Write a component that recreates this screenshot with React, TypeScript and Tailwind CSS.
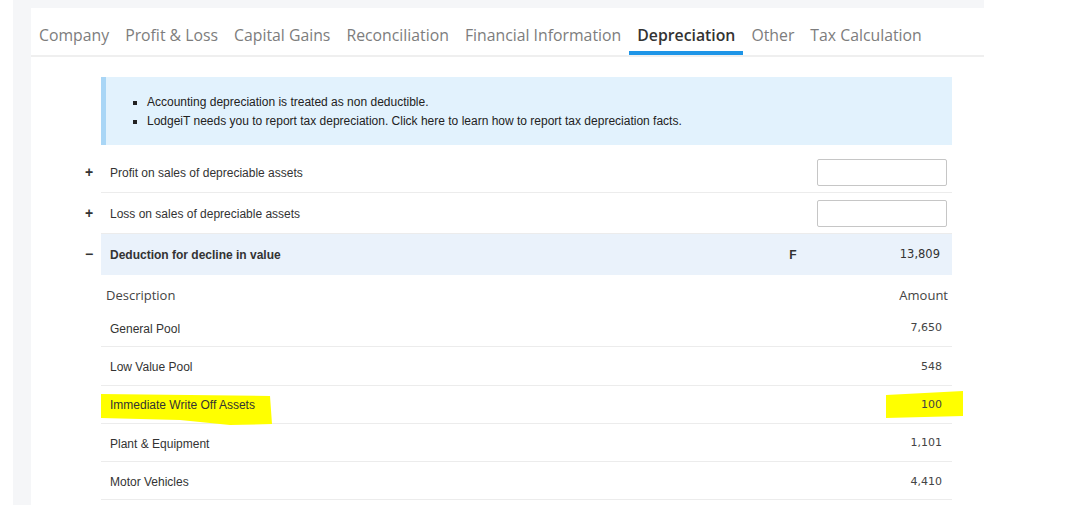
import React from 'react';

const tabs = [
    'Company',
    'Profit & Loss',
    'Capital Gains',
    'Reconciliation',
    'Financial Information',
    'Depreciation',
    'Other',
    'Tax Calculation',
];

const items = [
    { label: 'General Pool', amount: '7,650' },
    { label: 'Low Value Pool', amount: '548' },
    { label: 'Immediate Write Off Assets', amount: '100', marked: true },
    { label: 'Plant & Equipment', amount: '1,101' },
    { label: 'Motor Vehicles', amount: '4,410' },
];

function Marker() {
    // freehand yellow highlighter strokes over the row
    return (
        <svg className="absolute left-0 top-0 overflow-visible pointer-events-none" width="1" height="1">
            <polygon points="0,8 169,10 171,38 129,39 79,34 0,32" fill="#ffff00" />
            <polygon points="785,9 862,5 862,30 785,32" fill="#ffff00" />
        </svg>
    );
}

function SectionRow({ sign, label, right, open }: { sign: string; label: string; right: React.ReactNode; open?: boolean }) {
    return (
        <div className="flex">
            <div className="w-[24px] flex items-center justify-center text-[14px] font-bold text-[#333]">{sign}</div>
            <div className={`flex-1 flex items-center h-[41px] pl-[9px] ${open ? 'bg-[#eaf2fb] font-bold' : 'border-b-[1.5px] border-[#ececec]'}`}>
                <span className="flex-1 pt-[1px]">{label}</span>
                {right}
            </div>
        </div>
    );
}

function InputBox() {
    return <div className="w-[130px] h-[27px] mr-[5px] border border-[#c6c6c6] rounded-[2px] bg-white"></div>;
}

export default function App() {
    return (
        <div className="w-[1090px] h-[512px] bg-white overflow-hidden">
            <div className="ml-[13px] w-[971px] h-[505px] bg-[#f5f6f8] pt-[8px] pl-[18px] flex">
                <div className="flex-1 bg-white overflow-hidden">
                    <nav className="flex border-b-2 border-[#efefef]" style={{ fontFamily: '"Open Sans", sans-serif' }}>
                        {tabs.map(t => (
                            <div
                                key={t}
                                className={`px-[8px] pt-[16px] pb-[5px] text-[15.8px] leading-[22px] border-b-4 ${t === 'Depreciation' ? 'border-[#1e95e7] text-[#333] font-semibold' : 'border-transparent text-[#7d7d7d]'}`}
                            >
                                {t}
                            </div>
                        ))}
                    </nav>

                    <div className="pl-[46px] pr-[32px] pt-[20px] text-[12px] text-[#333]" style={{ fontFamily: '"Liberation Sans", Arial, sans-serif' }}>
                        <div className="ml-[24px] h-[68px] bg-[#e2f2fd] border-l-[5px] border-[#a9d6f6] pt-[16px]">
                            <ul className="list-[square] pl-[41px] text-[12px] leading-[19px] text-[#222]">
                                <li>Accounting depreciation is treated as non deductible.</li>
                                <li>LodgeiT needs you to report tax depreciation. Click here to learn how to report tax depreciation facts.</li>
                            </ul>
                        </div>

                        <div className="mt-[7px]">
                            <SectionRow sign="+" label="Profit on sales of depreciable assets" right={<InputBox />} />
                            <SectionRow sign="+" label="Loss on sales of depreciable assets" right={<InputBox />} />
                            <SectionRow
                                sign="−"
                                label="Deduction for decline in value"
                                open
                                right={
                                    <>
                                        <span className="w-[50px] text-center">F</span>
                                        <span className="w-[134px] text-right pr-[12px] font-normal text-[11.5px]" style={{ fontFamily: '"DejaVu Sans", Verdana, sans-serif' }}>13,809</span>
                                    </>
                                }
                            />
                        </div>

                        <div className="ml-[24px]">
                            <div className="flex h-[34px] pt-[11px] pl-[5px] pr-[4px] text-[13px] leading-[18px] text-[#444]" style={{ fontFamily: '"Open Sans", sans-serif' }}>
                                <span className="flex-1">Description</span>
                                <span>Amount</span>
                            </div>
                            {items.map(it => (
                                <div key={it.label} className="relative flex items-center h-[38.3px] pt-[2px] pl-[9px] pr-[10px] border-b-[1.5px] border-[#ececec]">
                                    {it.marked && <Marker />}
                                    <span className="relative flex-1">{it.label}</span>
                                    <span className="relative text-[11px] text-[#444]" style={{ fontFamily: '"DejaVu Sans", Verdana, sans-serif' }}>{it.amount}</span>
                                </div>
                            ))}
                        </div>
                    </div>
                </div>
            </div>
        </div>
    );
}
